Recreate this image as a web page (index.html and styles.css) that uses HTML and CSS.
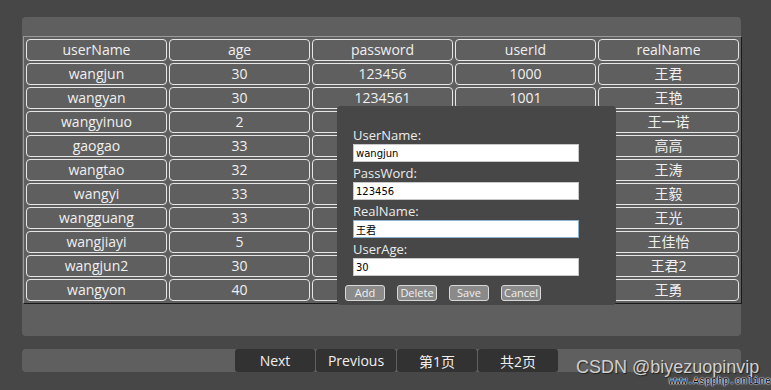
FILE: index.html
```html
<!DOCTYPE html>
<html>
<head>
<meta charset="utf-8">
<link rel="stylesheet" href="styles.css">
</head>
<body>
<div class="page">
  <div class="panel">
    <table class="grid">
      <thead>
        <tr><th>userName</th><th>age</th><th>password</th><th>userId</th><th>realName</th></tr>
      </thead>
      <tbody>
        <tr><td>wangjun</td><td>30</td><td>123456</td><td>1000</td><td>王君</td></tr>
        <tr><td>wangyan</td><td>30</td><td>1234561</td><td>1001</td><td>王艳</td></tr>
        <tr><td>wangyinuo</td><td>2</td><td></td><td></td><td>王一诺</td></tr>
        <tr><td>gaogao</td><td>33</td><td></td><td></td><td>高高</td></tr>
        <tr><td>wangtao</td><td>32</td><td></td><td></td><td>王涛</td></tr>
        <tr><td>wangyi</td><td>33</td><td></td><td></td><td>王毅</td></tr>
        <tr><td>wangguang</td><td>33</td><td></td><td></td><td>王光</td></tr>
        <tr><td>wangjiayi</td><td>5</td><td></td><td></td><td>王佳怡</td></tr>
        <tr><td>wangjun2</td><td>30</td><td></td><td></td><td>王君2</td></tr>
        <tr><td>wangyon</td><td>40</td><td></td><td></td><td>王勇</td></tr>
      </tbody>
    </table>
  </div>
  <div class="pager">
    <button class="pg">Next</button>
    <button class="pg">Previous</button>
    <button class="pg">第1页</button>
    <button class="pg">共2页</button>
  </div>
  <div class="dialog">
    <label class="lbl">UserName:</label>
    <input class="field" value="wangjun">
    <label class="lbl">PassWord:</label>
    <input class="field" value="123456">
    <label class="lbl">RealName:</label>
    <input class="field focus" value="王君">
    <label class="lbl">UserAge:</label>
    <input class="field" value="30">
    <div class="actions">
      <button class="btn">Add</button>
      <button class="btn">Delete</button>
      <button class="btn">Save</button>
      <button class="btn">Cancel</button>
    </div>
  </div>
  <div class="wm">CSDN @biyezuopinvip</div>
  <div class="wm2">www.Aspphp.online</div>
</div>
</body>
</html>
```
FILE: styles.css
```css
html, body {
  margin: 0;
  padding: 0;
}
body {
  background: #474747;
  width: 771px;
  height: 390px;
  overflow: hidden;
  font-family: "Open Sans", "Noto Sans CJK SC", sans-serif;
}
.page {
  position: relative;
  width: 771px;
  height: 390px;
  padding-top: 17px;
  box-sizing: border-box;
}
.panel {
  margin-left: 22px;
  width: 719px;
  height: 319px;
  background: #5f5f5f;
  border-radius: 4px;
  padding-top: 19px;
  box-sizing: border-box;
}
.grid {
  margin-left: 1px;
  width: 719px;
  table-layout: fixed;
  border-collapse: separate;
  border-spacing: 2px 2px;
  border-top: 1px solid #9a9a9a;
  border-left: 1px solid #9a9a9a;
  border-right: 1px solid #1a1a1a;
  border-bottom: 1px solid #1a1a1a;
  background: #5f5f5f;
}
.grid th, .grid td {
  height: 20px;
  padding: 0;
  border: 1px solid #e6e6e6;
  border-radius: 4px;
  color: #f0f0f0;
  font-size: 14px;
  font-weight: normal;
  text-align: center;
  line-height: 20px;
  background: #5f5f5f;
}
.pager {
  margin: 13px 0 0 22px;
  width: 719px;
  height: 23px;
  background: #5f5f5f;
  border-radius: 4px;
  display: flex;
  padding-left: 213px;
  box-sizing: border-box;
}
.pg {
  width: 80px;
  height: 23px;
  margin-right: 1px;
  background: #323232;
  border: none;
  border-radius: 3px;
  color: #f0f0f0;
  font-family: "Open Sans", "Noto Sans CJK SC", sans-serif;
  font-size: 14px;
  padding: 0;
}
.dialog {
  position: absolute;
  left: 337px;
  top: 106px;
  width: 279px;
  height: 199px;
  background: #474747;
  border-radius: 4px;
  box-sizing: border-box;
  padding: 20px 0 0 16px;
  display: flex;
  flex-direction: column;
  align-items: flex-start;
}
.lbl {
  color: #ececec;
  font-size: 13px;
  line-height: 18px;
  height: 18px;
}
.field {
  width: 226px;
  height: 18px;
  box-sizing: border-box;
  border: 1px solid #c8c8c8;
  background: #fff;
  font-family: "DejaVu Sans", "Noto Sans CJK SC", sans-serif;
  font-size: 10px;
  padding: 0 2px;
  margin: 0 0 2px 0;
  color: #000;
}
.field.focus {
  border-color: #8fb3cf;
}
.actions {
  display: flex;
  gap: 12px;
  margin: 7px 0 0 -8px;
}
.btn {
  width: 40px;
  height: 16px;
  padding: 0;
  background: #8a8a8a;
  border: 1px solid #d8d8d8;
  border-radius: 3px;
  color: #f0f0f0;
  font-family: "Open Sans", sans-serif;
  font-size: 11px;
  line-height: 14px;
}
.wm {
  position: absolute;
  left: 576px;
  top: 357px;
  font-family: "Liberation Sans", Arial, sans-serif;
  font-size: 18px;
  color: #d0d0d0;
  text-shadow: 1px 1px 1px #222;
}
.wm2 {
  position: absolute;
  right: 0;
  top: 376px;
  font-family: "Liberation Mono", monospace;
  font-size: 10px;
  line-height: 12px;
  color: #000;
  text-shadow: 0 0 2px #fff, 0 0 1px #fff, 0 0 1px #fff;
}
```
